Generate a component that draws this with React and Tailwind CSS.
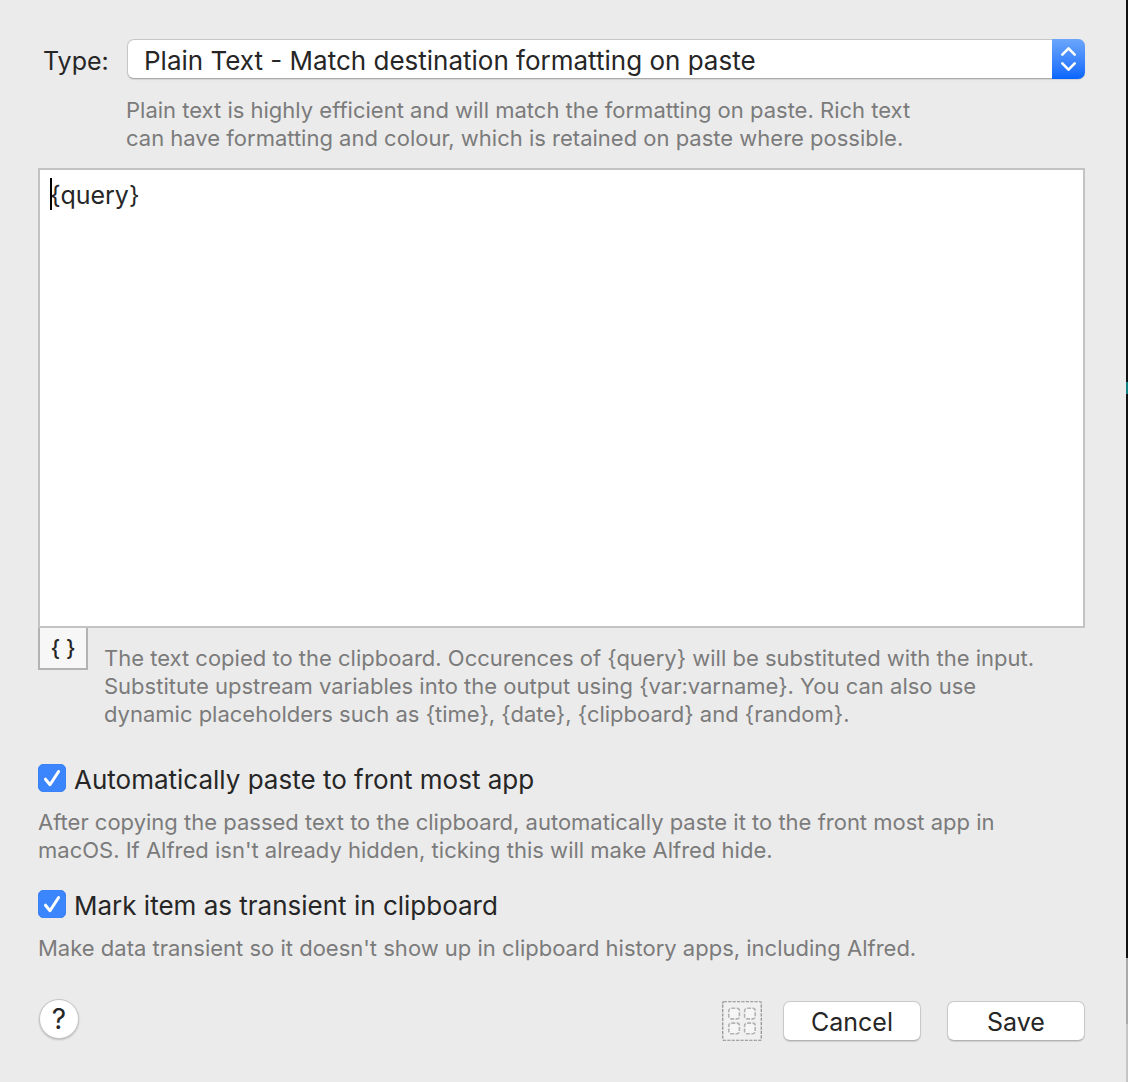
import React from "react";

const hint = "text-[22px] leading-7 text-[#7b7b7b]";
const pushButton =
  "h-10 w-[138px] rounded-[7px] border border-[#c9c9c9] border-b-[#b2b2b2] bg-white pt-0.5 text-[25px] leading-none shadow-[0_1px_1px_rgba(0,0,0,0.12)]";

function CheckOption({ id, label, children, className }) {
  return (
    <div className={className}>
      <div className="flex items-center gap-2">
        <span className="relative size-7 shrink-0">
          <input
            id={id}
            type="checkbox"
            defaultChecked
            aria-describedby={id + "-hint"}
            className="peer block size-7 appearance-none rounded-[5px] border border-[#b5b5b5] bg-white checked:border-[#3b82f8] checked:bg-[#3b86fd]"
          />
          <svg
            viewBox="0 0 28 28"
            className="pointer-events-none absolute inset-0 hidden size-7 peer-checked:block"
            fill="none"
            stroke="white"
            strokeWidth="3"
            strokeLinecap="round"
            strokeLinejoin="round"
            aria-hidden="true"
          >
            <path d="M7.5 15.2 12 20.7 20.6 7.5" />
          </svg>
        </span>
        <label htmlFor={id} className="pt-1 text-[26px] leading-8">
          {label}
        </label>
      </div>
      <p id={id + "-hint"} className={hint + " mt-3"}>
        {children}
      </p>
    </div>
  );
}

function GridIcon() {
  return (
    <svg viewBox="0 0 40 40" className="size-10" fill="none" aria-hidden="true">
      <rect x="0.75" y="0.75" width="38.5" height="38.5" rx="1" fill="#f0f0f0" stroke="#8c8c8c" strokeWidth="1.2" strokeDasharray="3.2 1.2" />
      <g stroke="#b2b2b2" strokeWidth="1.6" strokeDasharray="4 1.4" fill="#f6f6f6">
        <rect x="6.8" y="7.3" width="10.6" height="10.6" rx="2.5" />
        <rect x="22.6" y="7.3" width="10.6" height="10.6" rx="2.5" />
        <rect x="6.8" y="22.1" width="10.6" height="10.6" rx="2.5" />
        <rect x="22.6" y="22.1" width="10.6" height="10.6" rx="2.5" />
      </g>
    </svg>
  );
}

export default function App() {
  return (
    <div className="flex min-h-screen bg-[#ebebeb] font-['Inter',sans-serif] text-[#262626]">
      <form className="min-w-0 flex-1 pt-[39px] pr-[41px] pb-10 pl-[38px]" onSubmit={(e) => e.preventDefault()}>
        <div className="flex items-center">
          <label htmlFor="type" className="w-[89px] shrink-0 pt-1 pl-[5px] text-[25px] leading-9">
            Type:
          </label>
          <div className="relative h-10 flex-1">
            <select
              id="type"
              aria-describedby="type-hint"
              className="h-10 w-full appearance-none rounded-[7px] border border-[#c6c6c6] border-b-[#ababab] bg-white pt-1 pr-10 pl-4 text-[26px] leading-8 shadow-[0_1px_1px_rgba(0,0,0,0.1)]"
            >
              <option>Plain Text - Match destination formatting on paste</option>
              <option>Rich Text</option>
            </select>
            <span className="pointer-events-none absolute inset-y-0 right-0 w-[33px] rounded-r-[7px] bg-linear-to-b from-[#6ba6fb] to-[#0565fe]">
              <svg
                viewBox="0 0 33 40"
                className="h-10 w-[33px]"
                fill="none"
                stroke="white"
                strokeWidth="2.6"
                strokeLinecap="round"
                strokeLinejoin="round"
                aria-hidden="true"
              >
                <path d="M10.3 15.6 16.5 9.3 22.7 15.6M10.3 24.4 16.5 30.7 22.7 24.4" />
              </svg>
            </span>
          </div>
        </div>

        <p id="type-hint" className={hint + " mt-[17px] ml-[88px] max-w-[840px]"}>
          Plain text is highly efficient and will match the formatting on paste. Rich text
          <br />
          can have formatting and colour, which is retained on paste where possible.
        </p>

        <div className="relative mt-4">
          <textarea
            aria-label="Text"
            aria-describedby="text-hint"
            defaultValue="{query}"
            className="block h-[460px] w-full resize-none border-2 border-[#c3c3c3] bg-white px-2.5 py-[7px] text-[25px] leading-9 outline-none"
          />
          <span className="absolute top-[10px] left-3 h-8 w-0.5 bg-black" aria-hidden="true" />
        </div>

        <div className="flex items-start gap-4">
          <button
            type="button"
            aria-label="Insert placeholder"
            className="flex h-[42px] w-[50px] shrink-0 items-center justify-center border-2 border-t-0 border-[#b3b3b3] bg-[#f7f7f7] text-[22px] leading-none font-medium"
          >
            {"{ }"}
          </button>
          <p id="text-hint" className={hint + " mt-4"}>
            The text copied to the clipboard. Occurences of {"{query}"} will be substituted with the input.
            <br />
            Substitute upstream variables into the output using {"{var:varname}"}. You can also use
            <br />
            dynamic placeholders such as {"{time}"}, {"{date}"}, {"{clipboard}"} and {"{random}"}.
          </p>
        </div>

        <CheckOption id="auto-paste" label="Automatically paste to front most app" className="mt-8">
          After copying the passed text to the clipboard, automatically paste it to the front most app in
          <br />
          macOS. If Alfred isn't already hidden, ticking this will make Alfred hide.
        </CheckOption>

        <CheckOption id="transient" label="Mark item as transient in clipboard" className="mt-[22px]">
          Make data transient so it doesn't show up in clipboard history apps, including Alfred.
        </CheckOption>

        <div className="mt-[37px] flex items-start justify-between">
          <button
            type="button"
            aria-label="Help"
            className="ml-px size-10 rounded-full border border-[#c4c4c4] bg-white text-[28px] leading-none shadow-[0_1px_2px_rgba(0,0,0,0.2)]"
          >
            ?
          </button>
          <div className="flex items-center pt-0.5">
            <button type="button" aria-label="Layout" className="mr-[21px] size-10">
              <GridIcon />
            </button>
            <button type="button" className={pushButton + " mr-[26px]"}>
              Cancel
            </button>
            <button type="submit" className={pushButton}>
              Save
            </button>
          </div>
        </div>
      </form>

      <div className="flex w-0.5 shrink-0 flex-col" aria-hidden="true">
        <div className="grow-[382] bg-[#101214]" />
        <div className="grow-[12] bg-[#128080]" />
        <div className="grow-[564] bg-[#101214]" />
        <div className="grow-[66] bg-[#a9a9a9]" />
        <div className="grow-[58] bg-[#c6c6c6]" />
      </div>
    </div>
  );
}
